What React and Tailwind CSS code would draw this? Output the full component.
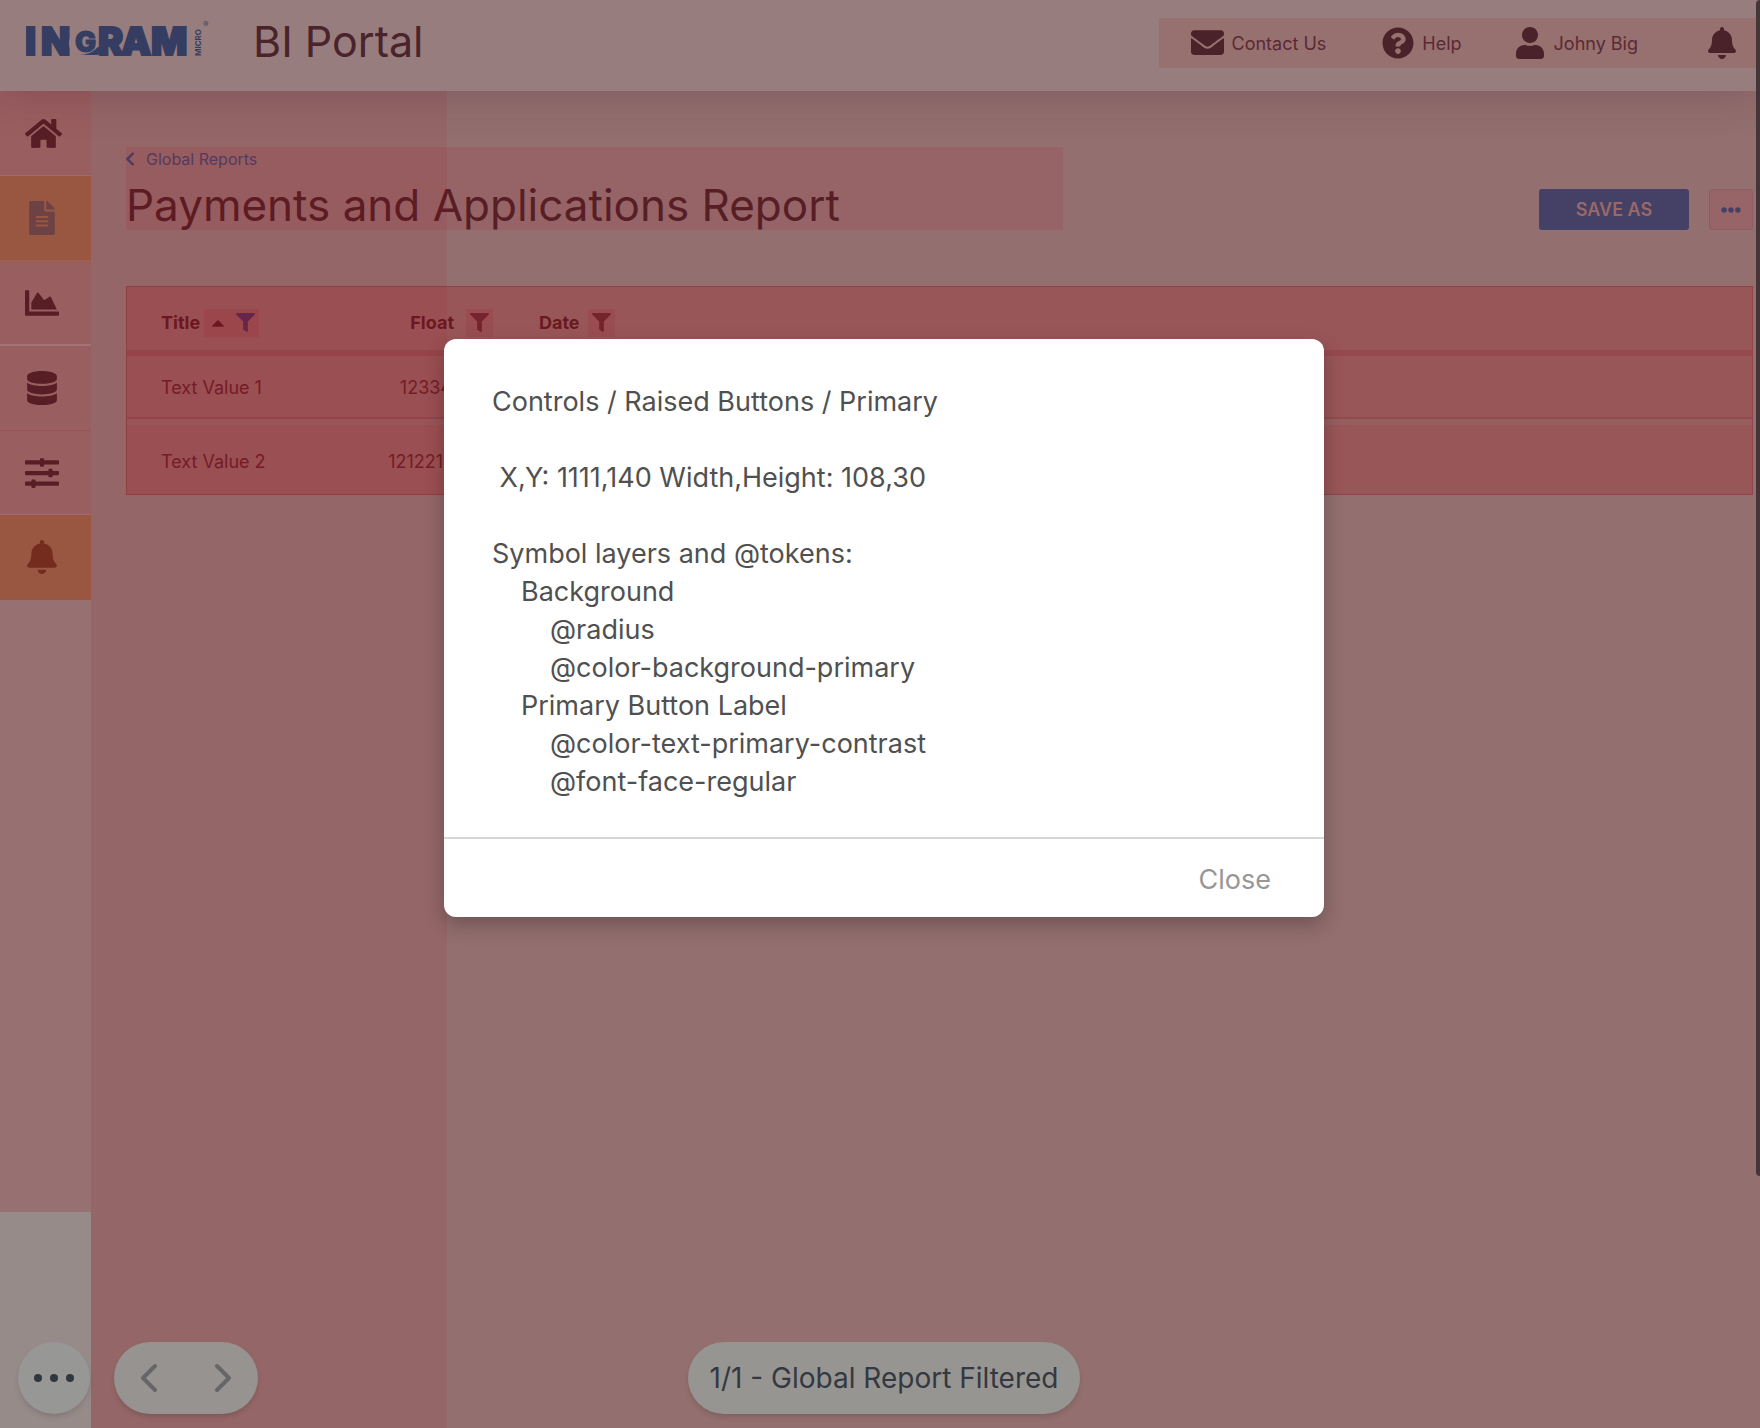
import { FaEnvelope, FaQuestionCircle, FaUser, FaBell, FaHome, FaFileAlt, FaChartArea, FaDatabase, FaSlidersH, FaFilter, FaCaretUp, FaChevronLeft, FaEllipsisH } from "react-icons/fa";
import { ChevronLeft, ChevronRight } from "lucide-react";

const NAV = [
  { label: "Home", Icon: FaHome, size: 37, tone: "h-[85px] pr-1 border-b bg-[#995e60] text-[#571e25] border-[#a06d6e]" },
  { label: "Reports", Icon: FaFileAlt, size: 34, tone: "h-[85px] pr-2 border-b bg-[#995742] text-[#6d4244] border-[#a06048]" },
  { label: "Charts", Icon: FaChartArea, size: 34, tone: "h-[85px] pr-2 border-b-2 bg-[#995e60] text-[#571e25] border-[#a27274]" },
  { label: "Data", Icon: FaDatabase, size: 34, tone: "h-[85px] pr-2 border-b bg-[#995e60] text-[#571e25] border-[#985259]" },
  { label: "Settings", Icon: FaSlidersH, size: 34, tone: "h-[84px] pr-2 border-b bg-[#995e60] text-[#571e25] border-[#a06d6e]" },
  { label: "Alerts", Icon: FaBell, size: 34, tone: "h-[85px] pr-2 border-b bg-[#995742] text-[#732c1e] border-[#995742]" },
];

function Logo() {
  return (
    <svg viewBox="0 0 188 60" className="h-[60px] w-[188px] shrink-0" role="img" aria-label="Ingram Micro">
      <g fill="#353d62" stroke="#353d62" strokeWidth="2" fontFamily="Inter, sans-serif" fontWeight="900" fontSize="38">
        <text x="-1 15" y="39">IN</text>
        <circle cx="58" cy="27" r="15" fill="#987d7e" stroke="none" />
        <text x="72 95 125" y="39">RAM</text>
        <text x="49" y="36" fontSize="28" strokeWidth="1">G</text>
      </g>
      <path d="M51 39 q12 1 21 -8 l8 0 l-8 8 z" fill="#353d62" />
      <g fill="#353d62" fontFamily="Inter, sans-serif">
        <text transform="translate(175 40) rotate(-90)" fontWeight="700" fontSize="8">MICRO</text>
        <text x="177" y="11" fontSize="8">®</text>
      </g>
    </svg>
  );
}

function FilterButton({ label, active }) {
  return (
    <button type="button" aria-label={label} className={active ? "text-[#5f2b50]" : "text-[#75242e]"}>
      <FaFilter size={19} />
    </button>
  );
}

export default function App() {
  return (
    <div className="relative flex min-h-screen flex-col overflow-hidden bg-[#936f6f] font-['Inter',sans-serif] text-[#571e25]">
      <header className="relative z-10 flex h-[91px] items-center bg-[#987d7e] pl-[26px] text-[#4a232b] shadow-[0_4px_40px_rgba(80,30,50,0.25)]">
        <Logo />
        <p className="mb-2 ml-[39px] text-[43px] leading-none">BI Portal</p>
        <nav className="mr-1 mb-1.5 ml-auto flex h-[50px] items-center bg-[#977070] pr-[18px] pl-8 text-lg text-[#5a2a33]">
          <a href="#contact" className="mr-14 flex items-center gap-2"><FaEnvelope size={33} className="text-[#4a222a]" /><span className="pt-0.5">Contact Us</span></a>
          <a href="#help" className="mr-[52px] flex items-center gap-2"><FaQuestionCircle size={32} className="text-[#4a222a]" /><span className="pt-0.5">Help</span></a>
          <a href="#account" className="mr-[68px] flex items-center gap-2"><FaUser size={32} className="text-[#4a222a]" /><span className="pt-0.5">Johny Big</span></a>
          <button type="button" aria-label="Notifications" className="text-[#4a222a]"><FaBell size={32} /></button>
        </nav>
      </header>

      <div className="flex flex-1">
        <nav className="flex w-[91px] shrink-0 flex-col bg-[#978b8a]" aria-label="Sections">
          {NAV.map(({ label, Icon, size, tone }) => (
            <a key={label} href={"#" + label.toLowerCase()} aria-label={label} className={"flex items-center justify-center " + tone}>
              <Icon size={size} />
            </a>
          ))}
          <div className="h-[612px] bg-[#977071]" />
        </nav>

        <main className="relative min-w-0 flex-1 pt-14 pr-[7px] pl-[35px]">
          <div className="flex items-start justify-between">
            <div className="h-[83px] w-[937px] bg-[#966466]">
              <a href="#reports" className="flex h-6 items-center gap-1 text-base text-[#4d4068]"><FaChevronLeft size={16} className="-ml-1" /><span className="pl-1">Global Reports</span></a>
              <h1 className="mt-2 text-[44px] leading-[52px] whitespace-nowrap">Payments and Applications Report</h1>
            </div>
            <div className="mt-[42px] flex gap-5">
              <button type="button" className="h-[41px] w-[150px] rounded-[3px] bg-[#444066] text-lg font-semibold text-[#996968]">SAVE AS</button>
              <button type="button" aria-label="More actions" className="flex h-[41px] w-11 items-center justify-center rounded-[3px] border border-[#8f5c60] bg-[#976567] text-[#444066]"><FaEllipsisH size={20} /></button>
            </div>
          </div>

          <table className="mt-14 w-full table-fixed border-separate border-spacing-0 border border-[#914348] bg-[#995658] text-lg text-[#702029]">
            <colgroup>
              <col className="w-[210px]" />
              <col className="w-[156px]" />
              <col />
            </colgroup>
            <thead>
              <tr className="text-left text-[#681a22]">
                <th className="h-[69px] border-b-[6px] border-[#964a4f] p-0 pt-2 pl-[34px] font-bold">
                  <div className="flex items-center gap-1">Title
                    <span className="flex h-7 items-center gap-2 bg-[#990010]/10 px-1"><FaCaretUp size={20} /><FilterButton label="Filter by title" active /></span>
                  </div>
                </th>
                <th className="border-b-[6px] border-[#964a4f] p-0 pt-2 font-bold">
                  <div className="flex items-center justify-end gap-3">Float<span className="flex h-7 items-center bg-[#990010]/10 px-1"><FilterButton label="Filter by float" /></span></div>
                </th>
                <th className="border-b-[6px] border-[#964a4f] p-0 pt-2 pl-[46px] font-bold">
                  <div className="flex items-center gap-2">Date<span className="flex h-7 items-center bg-[#990010]/10 px-1"><FilterButton label="Filter by date" /></span></div>
                </th>
              </tr>
            </thead>
            <tbody>
              <tr>
                <td className="h-[69px] border-b-[6px] border-[#985d5f] p-0 pl-[34px] shadow-[inset_0_-2px_#914b4e]">Text Value 1</td>
                <td className="border-b-[6px] border-[#985d5f] p-0 pr-[41px] text-right shadow-[inset_0_-2px_#914b4e]">12334</td>
                <td className="border-b-[6px] border-[#985d5f] p-0 shadow-[inset_0_-2px_#914b4e]" />
              </tr>
              <tr>
                <td className="h-[69px] p-0 pt-1 pl-[34px]">Text Value 2</td>
                <td className="p-0 pt-1 pr-[39px] text-right">1212212</td>
                <td />
              </tr>
            </tbody>
          </table>
          <div className="pointer-events-none absolute inset-y-0 left-0 w-[356px] bg-[#aa000a]/8" />
        </main>
      </div>

      <div className="absolute top-0 right-0 z-20 h-[1176px] w-1 rounded-l-full bg-[#463536]" />

      <footer className="absolute inset-x-0 bottom-3.5 z-20 flex items-center pl-[18px]">
        <button type="button" aria-label="Menu" className="flex size-[72px] items-center justify-center gap-2 rounded-full bg-[#979796] shadow-md">
          <span className="size-2 rounded-full bg-[#32373f]" /><span className="size-2 rounded-full bg-[#32373f]" /><span className="size-2 rounded-full bg-[#32373f]" />
        </button>
        <div className="ml-6 flex h-[72px] w-36 items-center justify-between rounded-full bg-[#979390] px-[11px] text-[#666668] shadow-md">
          <button type="button" aria-label="Previous"><ChevronLeft size={48} /></button>
          <button type="button" aria-label="Next"><ChevronRight size={48} /></button>
        </div>
      </footer>
      <div className="pointer-events-none absolute inset-x-0 bottom-3.5 z-20 flex justify-center pl-2">
        <p className="flex h-[72px] items-center rounded-full bg-[#979592] px-[22px] text-[28px] text-[#343840] shadow-md">1/1 - Global Report Filtered</p>
      </div>

      <div className="pointer-events-none absolute inset-0 z-30 flex items-start justify-center pt-[339px] pl-2">
        <section role="dialog" aria-modal="true" aria-label="Layer details" className="pointer-events-auto w-[880px] rounded-xl bg-white text-[27px] leading-[38px] text-[#505050] shadow-[0_8px_20px_rgba(0,0,0,0.25)]">
          <div className="h-[498px] px-12 pt-11">
            <p>Controls / Raised Buttons / Primary</p>
            <p className="mt-[38px] whitespace-pre"> X,Y: 1111,140 Width,Height: 108,30</p>
            <p className="mt-[38px]">Symbol layers and @tokens:</p>
            <ul className="pl-[29px]">
              <li>Background
                <ul className="pl-[29px]"><li>@radius</li><li>@color-background-primary</li></ul>
              </li>
              <li>Primary Button Label
                <ul className="pl-[29px]"><li>@color-text-primary-contrast</li><li>@font-face-regular</li></ul>
              </li>
            </ul>
          </div>
          <div className="flex h-20 items-center justify-end border-t-2 border-[#d5d7d6] pt-1 pr-[53px]">
            <button type="button" className="text-[#979797]">Close</button>
          </div>
        </section>
      </div>
    </div>
  );
}
